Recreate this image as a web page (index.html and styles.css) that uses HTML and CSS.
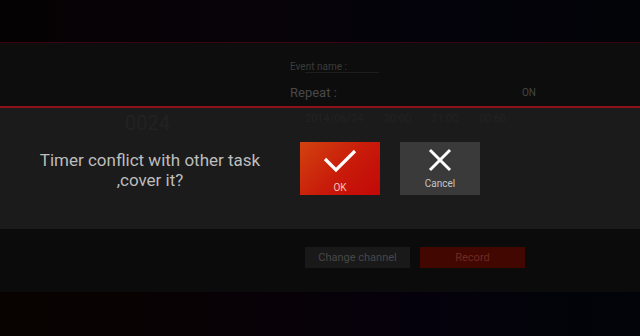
FILE: index.html
```html
<!DOCTYPE html>
<html lang="en">

<head>
  <meta charset="UTF-8">
  <title>Timer</title>
  <link rel="stylesheet" href="styles.css">
</head>

<body>
  <div class="screen">
    <div class="top"></div>

    <div class="form">
      <div class="row small">
        <span class="label">Event name :</span>
        <span class="field"></span>
      </div>
      <div class="row">
        <span class="label big">Repeat :</span>
        <span class="value">ON</span>
      </div>
    </div>

    <div class="dialog">
      <div class="ghost">
        <span class="g-time">0024</span>
        <span class="g-date">2014/06/24 &nbsp; 20:00 &nbsp; 21:00 &nbsp; 00:60</span>
      </div>
      <div class="msg">Timer conflict with other task<br>,cover it?</div>
      <div class="btns">
        <div class="btn ok">
          <svg width="36" height="26" viewBox="0 0 36 26">
            <path d="M3 11 L14 22 L33 3" fill="none" stroke="#fff" stroke-width="3.2"/>
          </svg>
          <span>OK</span>
        </div>
        <div class="btn cancel">
          <svg width="26" height="26" viewBox="0 0 26 26">
            <path d="M3 3 L23 23 M23 3 L3 23" fill="none" stroke="#fff" stroke-width="3"/>
          </svg>
          <span>Cancel</span>
        </div>
      </div>
    </div>

    <div class="actions">
      <div class="act gray">Change channel</div>
      <div class="act red">Record</div>
    </div>

    <div class="bottom"></div>
  </div>
</body>

</html>
```

FILE: styles.css
```css
* {
  box-sizing: border-box;
}

body {
  margin: 0;
  background: #030206;
  font-family: Roboto, "Liberation Sans", sans-serif;
}

.screen {
  width: 640px;
  height: 336px;
  display: flex;
  flex-direction: column;
  overflow: hidden;
}

.top {
  height: 42px;
  background: linear-gradient(90deg, #050203, #070309 40%, #04030b 70%, #030408);
}

.form {
  height: 66px;
  background: #0d0d0d;
  border-top: 1px solid #3a0510;
  border-bottom: 2px solid #8e1018;
  padding: 11px 0 0 290px;
}

.row {
  display: flex;
  align-items: center;
  width: 250px;
}

.row.small {
  height: 24px;
}

.row .label {
  color: #3c3c3c;
  font-size: 10px;
  width: 70px;
}

.row .label.big {
  font-size: 13px;
  color: #484848;
}

.field {
  width: 74px;
  height: 1px;
  margin: 12px 0 0 -55px;
  background: #1e1e1e;
}

.row:last-child {
  height: 28px;
  justify-content: space-between;
}

.value {
  color: #454545;
  font-size: 10px;
  margin-right: 4px;
}

.dialog {
  position: relative;
  height: 121px;
  background: #1b1b1b;
  display: flex;
  align-items: center;
}

.ghost {
  position: absolute;
  left: 0;
  top: 0;
  right: 0;
  color: #222;
}

.g-time {
  position: absolute;
  left: 125px;
  top: 3px;
  font-size: 20px;
}

.g-date {
  position: absolute;
  left: 305px;
  top: 4px;
  font-size: 11px;
  word-spacing: 4px;
}

.msg {
  position: relative;
  width: 300px;
  text-align: center;
  color: #bdbdbd;
  font-size: 17px;
  line-height: 20px;
  padding-top: 2px;
}

.btns {
  position: relative;
  display: flex;
  gap: 20px;
}

.btn {
  width: 80px;
  height: 53px;
  display: flex;
  flex-direction: column;
  align-items: center;
  padding-top: 5px;
}

.btn span {
  font-size: 10px;
  margin-top: 5px;
}

.ok {
  background: linear-gradient(135deg, #d2420f, #c81a0a 55%, #c20808);
}

.ok span {
  color: #f3c4b4;
  margin-top: 8px;
}

.ok svg {
  margin-top: 1px;
}

.cancel {
  background: #3a3a3a;
}

.cancel span {
  color: #c4c4c4;
}

.actions {
  height: 63px;
  background: #0b0b0b;
  display: flex;
  gap: 10px;
  padding: 18px 0 0 305px;
}

.act {
  width: 105px;
  height: 21px;
  font-size: 11px;
  display: flex;
  align-items: center;
  justify-content: center;
}

.act.gray {
  background: #191919;
  color: #474747;
}

.act.red {
  background: #420700;
  color: #6e2a22;
}

.bottom {
  flex: 1;
  background: linear-gradient(90deg, #080300, #080106 40%, #05010c 65%, #010408);
}
```
